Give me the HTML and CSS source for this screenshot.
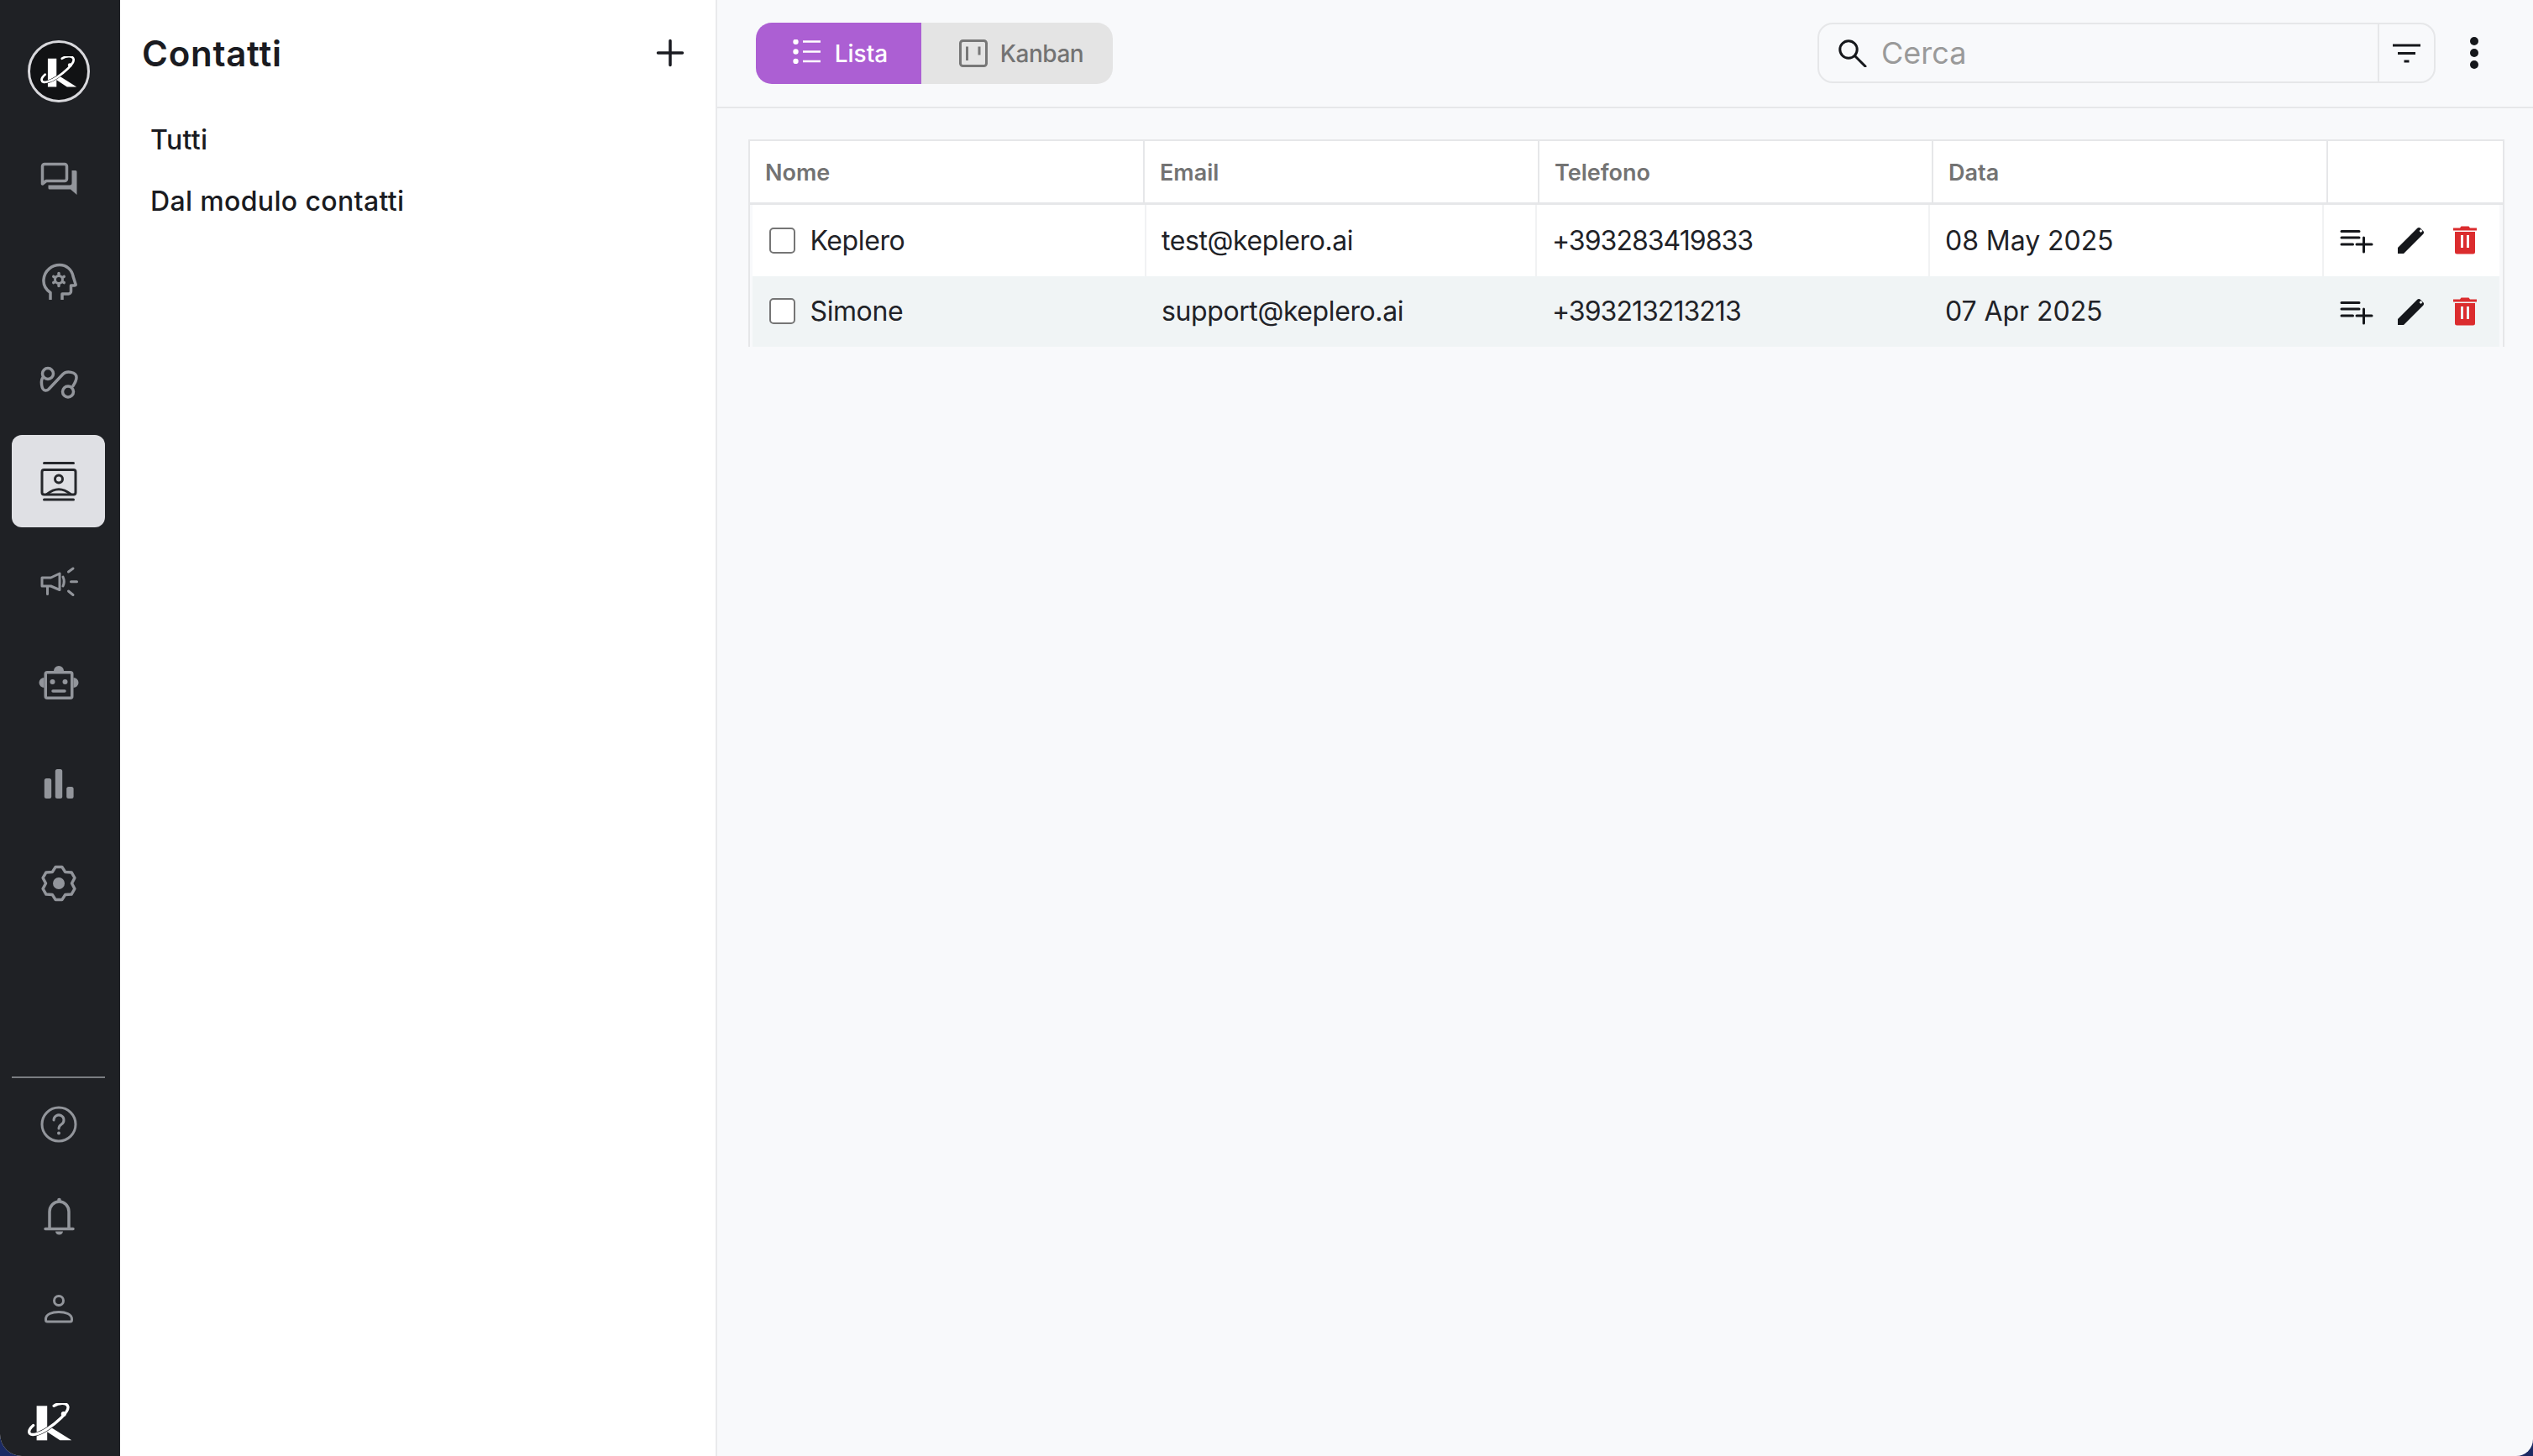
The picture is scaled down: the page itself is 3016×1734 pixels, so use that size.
FILE: index.html
```html
<!DOCTYPE html>
<html lang="it">
<head>
    <meta charset="UTF-8">
    <title>Keplero - Contatti</title>
    <link rel="stylesheet" href="styles.css">
</head>
<body>
    <svg class="defs" xmlns="http://www.w3.org/2000/svg">
        <symbol id="k-logo" viewBox="98 38 160 136">
            <rect x="130" y="48" width="38" height="124" fill="#fff"/>
            <polygon points="176,122 256,172 214,172 160,136" fill="#fff"/>
            <path d="M192 48C210 36 240 34 243 52C245 72 200 110 170 130C140 150 105 160 103 142C102 132 110 125 118 118" fill="none" stroke="currentColor" stroke-width="14"/>
            <path d="M192 48C210 36 240 34 243 52C245 72 200 110 170 130C140 150 105 160 103 142C102 132 110 125 118 118" fill="none" stroke="#fff" stroke-width="10" stroke-linecap="round"/>
            <circle cx="227" cy="77" r="9" fill="#fff"/>
        </symbol>
    </svg>

    <div class="app">
        <aside class="sidebar">
            <div class="logo-circle">
                <svg class="logo-top"><use href="#k-logo"/></svg>
            </div>

            <nav class="nav">
                <a class="nav-item">
                    <svg class="nav-icon" viewBox="0 0 48 48">
                        <path d="M4.500 30V9a2.500 2.500 0 0 1 2.500-2.500H31A2.500 2.500 0 0 1 33.500 9V24A2.500 2.500 0 0 1 31 26.500H9z"/>
                        <path class="solid" d="M39.500 14H44a1.500 1.500 0 0 1 1.500 1.500V43l-7.500-6.500H13a1.500 1.500 0 0 1-1.500-1.500V31.500H37a2.500 2.500 0 0 0 2.500-2.500z"/>
                    </svg>
                </a>
                <a class="nav-item">
                    <svg class="nav-icon" viewBox="0 -2 48 48">
                        <path d="M14 45.500V37.500C8 33.500 5.500 28 6 22C7 11 16 4.500 25 4.500C33 4.500 39.500 10 41 18L44 27.500Q44.500 29 43 29H38.500V36a3 3 0 0 1-3 3H28V45.500"/>
                        <circle class="thin" cx="24" cy="22" r="4.500"/>
                        <path d="M24 15.500v-1M24 28.500v1M29.600 18.750L30.200 18.400M29.600 25.250L30.200 25.600M18.400 18.750L17.800 18.400M18.400 25.250L17.800 25.600"/>
                    </svg>
                </a>
                <a class="nav-item">
                    <svg class="nav-icon" viewBox="0 -2.500 48 48">
                        <circle cx="11" cy="13.500" r="6.500"/>
                        <circle cx="35" cy="35" r="6.500"/>
                        <path d="M5.500 17.500C2 21 3 33 8 33.500C9.500 33.700 11 33 12 32L29 14C33 10 45 11 45 18C45 22 43 25 41 28"/>
                    </svg>
                </a>
                <a class="nav-item active">
                    <svg class="nav-icon" viewBox="0 -1 48 48">
                        <path d="M6.500 1.500H41.500M6.500 45H41.500"/>
                        <rect x="4" y="9.500" width="40" height="29.500" rx="2.500"/>
                        <circle cx="24" cy="20.500" r="4.500"/>
                        <path d="M10 38.500Q24 27 38 38.500"/>
                    </svg>
                </a>
                <a class="nav-item">
                    <svg class="nav-icon" viewBox="0 0 48 48">
                        <path class="thin" d="M4 19H14.500L25 14V33.500L14.500 29H4zM10.500 29V38.500"/>
                        <path class="thin" d="M29 18Q31.500 23.500 29 29M35.500 12L41 8M38.500 23.800H45.500M35.500 35L41 39.500"/>
                    </svg>
                </a>
                <a class="nav-item">
                    <svg class="nav-icon" viewBox="0 0 48 48">
                        <rect x="8.250" y="11.750" width="31.500" height="30.500" rx="2"/>
                        <path class="solid" d="M18 10a6 6 0 0 1 12 0zM6.500 18a6 6 0 0 0 0 12zM41.500 18a6 6 0 0 1 0 12z"/>
                        <circle class="solid" cx="16.500" cy="23" r="3"/>
                        <circle class="solid" cx="31.500" cy="23" r="3"/>
                        <path d="M17 34H31"/>
                    </svg>
                </a>
                <a class="nav-item">
                    <svg class="nav-icon" viewBox="0 0 48 48">
                        <rect class="solid" x="6.800" y="18" width="8.400" height="24" rx="2.500"/>
                        <rect class="solid" x="19.800" y="7" width="8.400" height="35" rx="2.500"/>
                        <rect class="solid" x="33.200" y="28" width="8.400" height="14" rx="2.500"/>
                    </svg>
                </a>
                <a class="nav-item">
                    <svg class="nav-icon" viewBox="0 1 48 48">
                        <path d="M20.200 4.400H27.800L31.750 10.600L39.100 10.900L42.900 17.500L39.500 24L42.900 30.500L39.100 37.100L31.750 37.400L27.800 43.600H20.200L16.250 37.400L8.900 37.100L5.100 30.500L8.500 24L5.100 17.500L8.900 10.900L16.250 10.600z"/>
                        <circle class="solid" cx="24" cy="24" r="7"/>
                    </svg>
                </a>
            </nav>

            <div class="sidebar-bottom">
                <div class="divider"></div>
                <a class="nav-item">
                    <svg class="nav-icon" viewBox="0 0 48 48">
                        <circle cx="24" cy="24" r="20" class="thin"/>
                        <path class="thin" d="M18 19a6 6 0 1 1 9.200 5C25 25.400 24 26.500 24 29"/>
                        <circle class="solid" cx="24" cy="34.500" r="2"/>
                    </svg>
                </a>
                <a class="nav-item">
                    <svg class="nav-icon" viewBox="0 0 48 48">
                        <path d="M13 38V18a11.500 12 0 0 1 23 0V38M8 38.500H41"/>
                        <circle class="solid" cx="24.500" cy="4" r="2.300"/>
                        <path class="solid" d="M20 41.500h9a4.500 4 0 0 1-9 0z"/>
                    </svg>
                </a>
                <a class="nav-item">
                    <svg class="nav-icon" viewBox="0 0 48 48">
                        <circle cx="24" cy="14" r="5.500" class="thin"/>
                        <path class="thin" d="M8.500 36C8.500 30 16 27.500 24 27.500C32 27.500 39.500 30 39.500 36V37a2 2 0 0 1-2 2H10.500a2 2 0 0 1-2-2z"/>
                    </svg>
                </a>
                <svg class="logo-bottom"><use href="#k-logo"/></svg>
            </div>
        </aside>

        <section class="panel">
            <div class="panel-head">
                <h1>Contatti</h1>
                <svg class="add-icon" viewBox="0 0 48 48"><path d="M24 9.500V38.500M9.500 24H38.500"/></svg>
            </div>
            <a class="panel-link">Tutti</a>
            <a class="panel-link">Dal modulo contatti</a>
        </section>

        <main class="main">
            <div class="toolbar">
                <div class="toggle">
                    <button class="toggle-btn selected">
                        <svg class="toggle-list" viewBox="0 0 33 29">
                            <circle cx="3.500" cy="2.800" r="3.200"/>
                            <circle cx="3.500" cy="14.500" r="3.200"/>
                            <circle cx="3.500" cy="26" r="3.200"/>
                            <path d="M12 2.500H33M12 14.500H33M12 26H33"/>
                        </svg>
                        Lista
                    </button>
                    <button class="toggle-btn">
                        <svg class="toggle-kanban" viewBox="0 0 34 33">
                            <rect x="1.500" y="1.500" width="31" height="30" rx="3"/>
                            <path d="M9.500 8.500V25M24 8.500V18.500"/>
                        </svg>
                        Kanban
                    </button>
                </div>

                <div class="search">
                    <svg class="search-icon" viewBox="0 0 34 33">
                        <circle cx="12" cy="12" r="10.200"/>
                        <path d="M19.500 19.500L32 32"/>
                    </svg>
                    <input class="search-input" type="text" placeholder="Cerca">
                    <div class="filter-btn">
                        <svg class="filter-icon" viewBox="0 0 33 24">
                            <path d="M0 3H33M6 12.500H27M13.500 22H19.500"/>
                        </svg>
                    </div>
                </div>

                <svg class="more-icon" viewBox="0 0 32 48">
                    <circle cx="16" cy="10" r="5"/>
                    <circle cx="16" cy="24" r="5"/>
                    <circle cx="16" cy="38" r="5"/>
                </svg>
            </div>

            <div class="table-wrap">
                <div class="table-head">
                    <div>Nome</div>
                    <div>Email</div>
                    <div>Telefono</div>
                    <div>Data</div>
                    <div></div>
                </div>
                <div class="table-body">
                    <div class="table-row">
                        <div class="cell"><span class="checkbox"></span>Keplero</div>
                        <div class="cell">test@keplero.ai</div>
                        <div class="cell tel">+393283419833</div>
                        <div class="cell date">08 May 2025</div>
                        <div class="cell actions">
                            <svg class="act-list" viewBox="0 0 48 48"><path d="M6 13.500H27M6 21H27M6 29H19.500M24 29H42M32.500 21V38"/></svg>
                            <svg class="act-edit" viewBox="0 0 48 48"><path fill-rule="evenodd" d="M8 40V33L31 10a3 3 0 0 1 4.200 0L38 12.800a3 3 0 0 1 0 4.200L15 40zM33.500 13l2-2 2 2-2 2z"/></svg>
                            <svg class="act-delete" viewBox="0 0 48 48"><path fill-rule="evenodd" d="M10 9.500h8l1.500-2h9l1.500 2h8v3h-28zM12 14H36V38a2.500 2.500 0 0 1-2.500 2.500h-19A2.500 2.500 0 0 1 12 38zM19 18v15h3V18zM26 18v15h3V18z"/></svg>
                        </div>
                    </div>
                    <div class="table-row">
                        <div class="cell"><span class="checkbox"></span>Simone</div>
                        <div class="cell">support@keplero.ai</div>
                        <div class="cell tel">+393213213213</div>
                        <div class="cell date">07 Apr 2025</div>
                        <div class="cell actions">
                            <svg class="act-list" viewBox="0 0 48 48"><path d="M6 13.500H27M6 21H27M6 29H19.500M24 29H42M32.500 21V38"/></svg>
                            <svg class="act-edit" viewBox="0 0 48 48"><path fill-rule="evenodd" d="M8 40V33L31 10a3 3 0 0 1 4.200 0L38 12.800a3 3 0 0 1 0 4.200L15 40zM33.500 13l2-2 2 2-2 2z"/></svg>
                            <svg class="act-delete" viewBox="0 0 48 48"><path fill-rule="evenodd" d="M10 9.500h8l1.500-2h9l1.500 2h8v3h-28zM12 14H36V38a2.500 2.500 0 0 1-2.500 2.500h-19A2.500 2.500 0 0 1 12 38zM19 18v15h3V18zM26 18v15h3V18z"/></svg>
                        </div>
                    </div>
                </div>
            </div>
        </main>
    </div>
</body>
</html>
```

FILE: styles.css
```css
:root {
    --sidebar: #1f2125;
    --icon: #92959b;
    --purple: #ac5fd3;
    --line: #e6e7e9;
    --page: #f8f9fb;
    --text: #212227;
}

* {
    box-sizing: border-box;
}

html, body {
    height: 100%;
}

body {
    margin: 0;
    background: #1b2a63;
    font-family: Inter, "Noto Sans", sans-serif;
    color: var(--text);
    overflow: hidden;
}

.defs {
    display: none;
}

.app {
    display: flex;
    height: 100%;
    background: var(--page);
    border-radius: 0 0 20px 26px;
    overflow: hidden;
}

/* sidebar */

.sidebar {
    width: 143px;
    flex-shrink: 0;
    display: flex;
    flex-direction: column;
    align-items: center;
    padding: 48px 4px 18px 0;
    background: var(--sidebar);
}

.logo-circle {
    width: 74px;
    height: 74px;
    border: 3.5px solid #d8d8dc;
    border-radius: 50%;
    background: #111214;
    color: #111214;
    display: flex;
    align-items: center;
    justify-content: center;
}

.logo-top {
    width: 44px;
    height: 37px;
}

.nav {
    margin-top: 36px;
    display: flex;
    flex-direction: column;
    gap: 10px;
}

.nav-item {
    width: 111px;
    height: 110px;
    border-radius: 12px;
    display: flex;
    align-items: center;
    justify-content: center;
}

.nav-item.active {
    background: #dfe0e4;
}

.nav-icon {
    width: 48px;
    height: 48px;
    fill: none;
    stroke: var(--icon);
    stroke-width: 3.5;
    stroke-linecap: round;
    stroke-linejoin: round;
}

.nav-icon .solid {
    fill: var(--icon);
    stroke: none;
}

.nav-icon .thin {
    stroke-width: 3;
}

.active .nav-icon {
    stroke: #26282c;
    stroke-width: 3;
}

.sidebar-bottom {
    margin-top: auto;
    display: flex;
    flex-direction: column;
    align-items: center;
}

.divider {
    width: 111px;
    height: 2px;
    background: #7a7d82;
}

.logo-bottom {
    width: 53px;
    height: 45px;
    margin-top: 57px;
    margin-right: 20px;
    color: var(--sidebar);
}

/* contacts panel */

.panel {
    width: 711px;
    flex-shrink: 0;
    background: #fff;
    border-right: 2px solid #e9eaec;
}

.panel-head {
    height: 130px;
    padding: 0 30px 4px 26px;
    display: flex;
    align-items: center;
    justify-content: space-between;
}

h1 {
    margin: 0;
    font-size: 42px;
    font-weight: 600;
    letter-spacing: 0.75px;
    color: #1a1b21;
}

.add-icon {
    width: 48px;
    height: 48px;
    fill: none;
    stroke: #1a1b21;
    stroke-width: 3.5;
    stroke-linecap: round;
}

.panel-link {
    display: flex;
    align-items: center;
    height: 73px;
    padding-left: 36px;
    font-size: 32px;
    font-weight: 500;
    letter-spacing: 0.35px;
    color: #1a1b21;
}

/* toolbar */

.main {
    flex: 1;
    min-width: 0;
}

.toolbar {
    height: 129px;
    padding: 27px 54px 0 46px;
    display: flex;
    align-items: flex-start;
    border-bottom: 2px solid var(--line);
}

.toggle {
    display: flex;
    height: 73px;
    border-radius: 19px;
    overflow: hidden;
}

.toggle-btn {
    display: flex;
    align-items: center;
    justify-content: center;
    gap: 15px;
    width: 228px;
    padding: 0 0 0 10px;
    border: none;
    background: #e4e4e4;
    color: #737373;
    font: 500 28px Inter, "Noto Sans", sans-serif;
    letter-spacing: -0.5px;
}

.toggle-btn.selected {
    width: 197px;
    gap: 17px;
    padding-left: 4px;
    background: var(--purple);
    color: #fff;
    letter-spacing: 0;
}

.toggle-list {
    width: 33px;
    height: 29px;
    margin-top: -4px;
    fill: #fff;
    stroke: none;
}

.toggle-list path {
    fill: none;
    stroke: #fff;
    stroke-width: 2.5;
}

.toggle-kanban {
    width: 34px;
    height: 33px;
    fill: none;
    stroke: #777;
    stroke-width: 3;
}

.search {
    margin-left: auto;
    width: 736px;
    height: 72px;
    display: flex;
    align-items: center;
    padding-left: 23px;
    border: 2px solid var(--line);
    border-radius: 18px;
}

.search-icon {
    width: 34px;
    height: 33px;
    flex-shrink: 0;
    fill: none;
    stroke: #15171b;
    stroke-width: 3;
    stroke-linecap: round;
}

.search-input {
    flex: 1;
    min-width: 0;
    margin-left: 17px;
    border: none;
    outline: none;
    background: none;
    padding: 0;
    font: 400 36px Inter, "Noto Sans", sans-serif;
}

.search-input::placeholder {
    color: #9a9a9a;
    opacity: 1;
}

.filter-btn {
    width: 67px;
    height: 100%;
    display: flex;
    align-items: center;
    justify-content: center;
    border-left: 2px solid var(--line);
}

.filter-icon {
    width: 33px;
    height: 24px;
    fill: none;
    stroke: #15171b;
    stroke-width: 3;
}

.more-icon {
    width: 32px;
    height: 48px;
    margin: 12px 0 0 30px;
    fill: #15171b;
}

/* table */

.table-wrap {
    padding: 37px 34px 0 37px;
}

.table-head {
    display: grid;
    grid-template-columns: 470px 470px 469px 470px 1fr;
    height: 78px;
    padding-top: 2px;
    background: #fff;
    border: 2px solid var(--line);
    border-bottom-width: 3px;
    font-size: 27px;
    font-weight: 600;
    color: #737373;
}

.table-head div {
    display: flex;
    align-items: center;
    margin-top: -2px;
    padding: 2px 0 0 18px;
    border-right: 2px solid var(--line);
}

.table-head div:last-child {
    border-right: none;
}

.table-body {
    padding: 0 4px 0 3px;
    border: 2px solid var(--line);
    border-width: 0 2px;
}

.table-row {
    display: grid;
    grid-template-columns: 469px 465px 468px 469px 1fr;
    height: 84.5px;
    background: #fff;
    font-size: 32px;
    letter-spacing: -0.4px;
}

.table-row:nth-child(even) {
    background: #f0f4f5;
}

.cell {
    display: flex;
    align-items: center;
    padding-left: 18px;
    border-right: 2px solid #f1f2f3;
}

.table-row:nth-child(even) .cell {
    border-right-color: transparent;
}

.cell:last-child {
    border-right: none;
}

.cell.tel {
    letter-spacing: -0.95px;
}

.cell.date {
    letter-spacing: -0.05px;
}

.checkbox {
    width: 31px;
    height: 31px;
    margin: 0 18px 0 1.5px;
    border: 2.5px solid #757575;
    border-radius: 5px;
    background: #fff;
}

.actions {
    padding-left: 15px;
    gap: 16.5px;
}

.actions svg {
    width: 48px;
    height: 48px;
    flex-shrink: 0;
}

.act-list {
    fill: none;
    stroke: #15171b;
    stroke-width: 3;
    stroke-linecap: round;
}

.act-edit {
    fill: #15171b;
}

.act-delete {
    fill: #db2c2e;
}
```
